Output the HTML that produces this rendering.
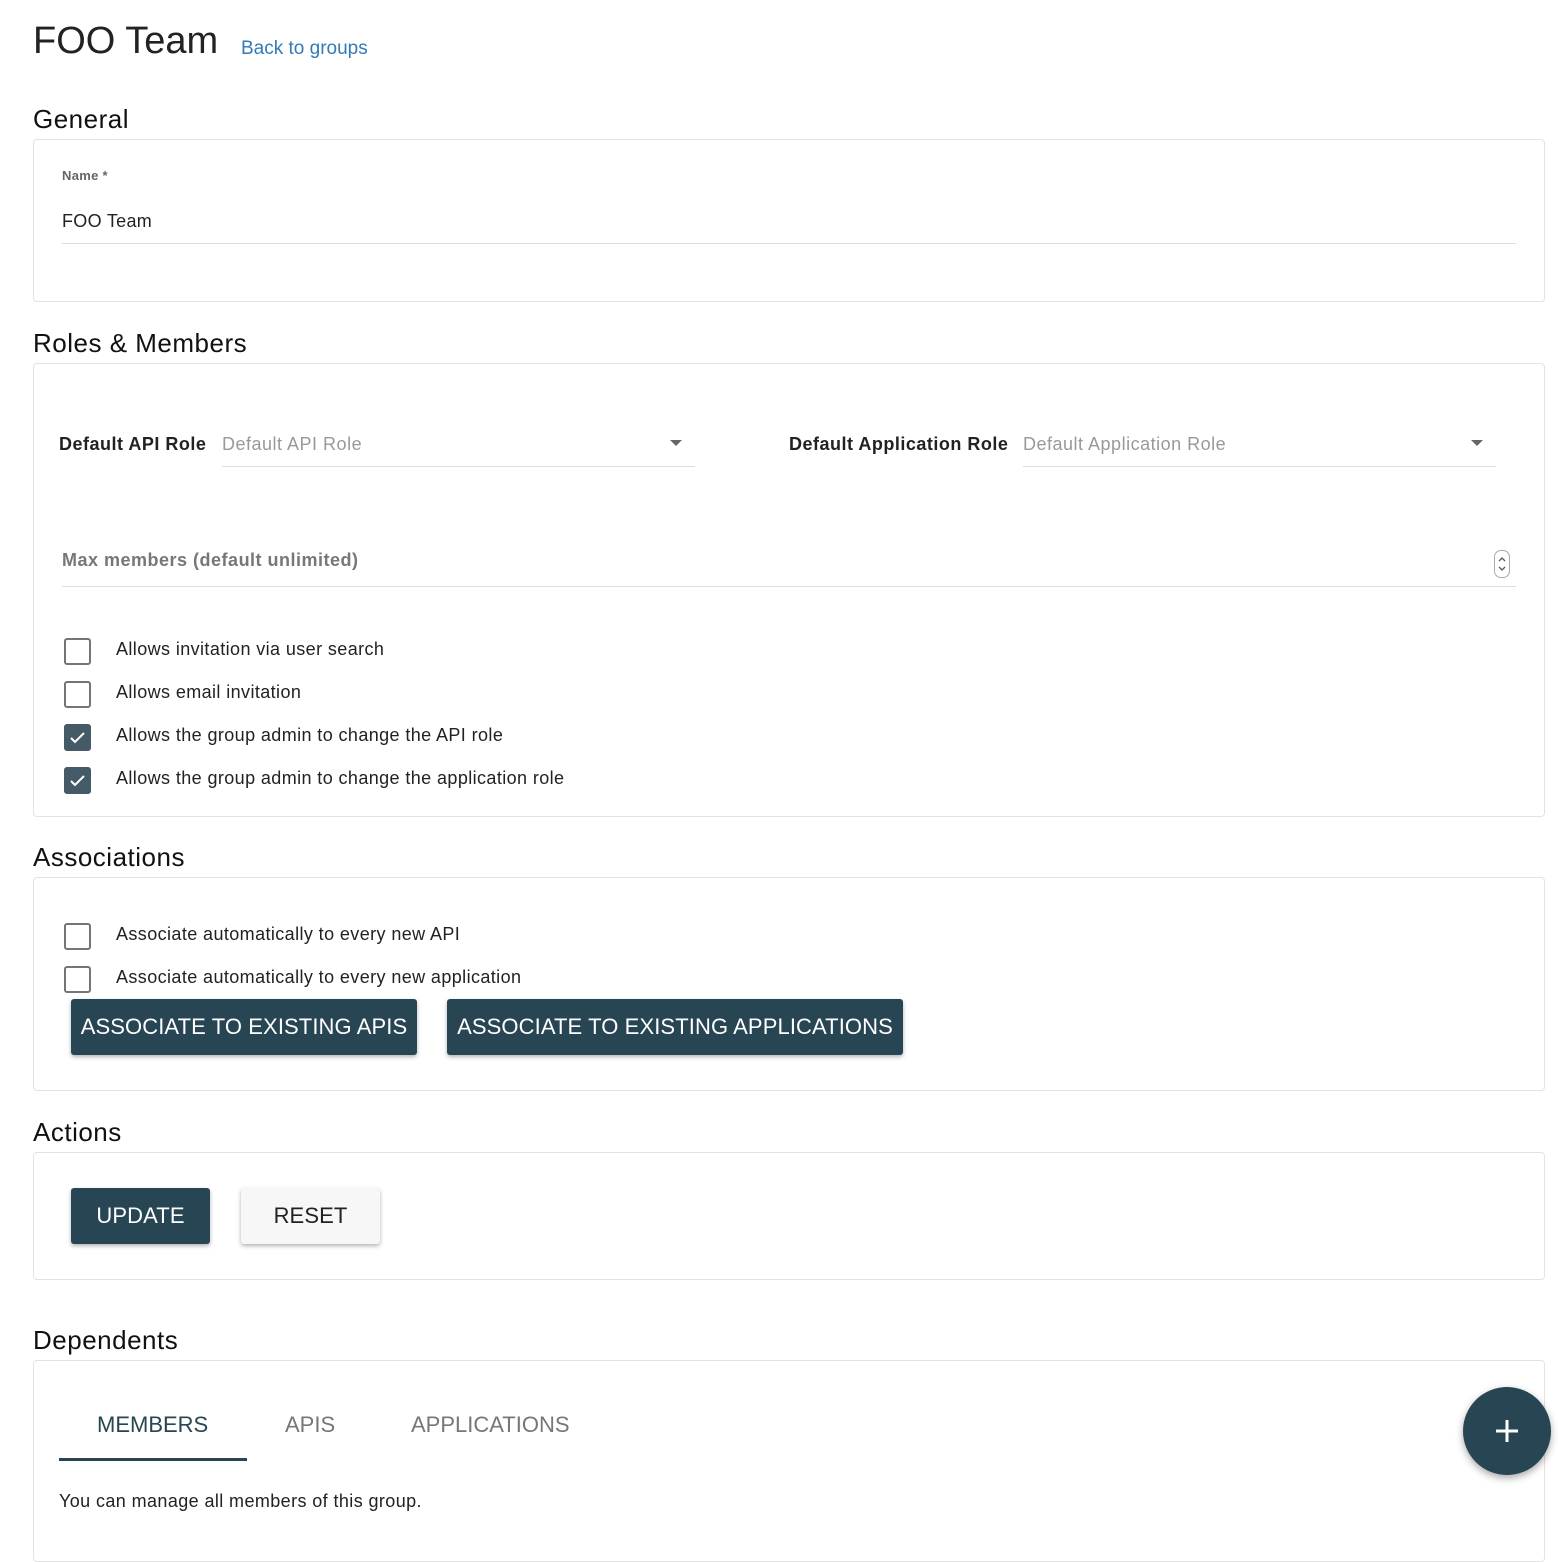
<!DOCTYPE html>
<html><head><style>
body{margin:0;width:1558px;height:1504px;overflow:hidden;background:#fff;font-family:"Liberation Sans",sans-serif;color:#222;position:relative}
.a{position:absolute;white-space:nowrap}
.card{position:absolute;left:33px;width:1510px;border:1px solid #e3e3e3;border-radius:4px;background:#fff}
h2{position:absolute;margin:0;font-weight:normal;font-size:26px;left:33px;color:#111;letter-spacing:.5px}
.line{position:absolute;height:1px;background:#ddd}
.cb{position:absolute;left:64px;width:23px;height:23px;border:2px solid #757575;border-radius:3px}
.cb.on{background:#445a66;border-color:#445a66}
.cb.on svg{position:absolute;left:2px;top:2px}
.lbl{position:absolute;left:116px;font-size:18px;color:#222;white-space:nowrap;letter-spacing:.4px}
.btn{position:absolute;background:#274552;color:#fff;font-size:22px;display:flex;align-items:center;justify-content:center;border-radius:3px;box-shadow:0 2px 4px rgba(0,0,0,.3);letter-spacing:.1px}
.tri{position:absolute;width:0;height:0;border-left:6px solid transparent;border-right:6px solid transparent;border-top:6px solid #666}
.b{letter-spacing:.5px}
</style></head><body>
<div class="a" style="left:33px;top:20px;font-size:38px;color:#222">FOO Team</div>
<div class="a" style="left:241px;top:38px;font-size:19px;color:#337ab7">Back to groups</div>

<h2 style="top:104px">General</h2>
<div class="card" style="top:139px;height:161px"></div>
<div class="a" style="left:62px;top:168px;font-size:13px;font-weight:bold;color:#666;letter-spacing:.3px">Name *</div>
<div class="a" style="left:62px;top:211px;font-size:18px;letter-spacing:.3px">FOO Team</div>
<div class="line" style="left:62px;top:243px;width:1454px"></div>

<h2 style="top:328px">Roles &amp; Members</h2>
<div class="card" style="top:363px;height:452px"></div>
<div class="a b" style="left:59px;top:434px;font-size:18px;font-weight:bold">Default API Role</div>
<div class="a b" style="left:222px;top:434px;font-size:18px;color:#999">Default API Role</div>
<div class="tri" style="left:670px;top:440px"></div>
<div class="line" style="left:222px;top:466px;width:473px"></div>
<div class="a b" style="left:789px;top:434px;font-size:18px;font-weight:bold">Default Application Role</div>
<div class="a b" style="left:1023px;top:434px;font-size:18px;color:#999">Default Application Role</div>
<div class="tri" style="left:1471px;top:440px"></div>
<div class="line" style="left:1023px;top:466px;width:473px"></div>
<div class="a b" style="left:62px;top:550px;font-size:18px;font-weight:bold;color:#777">Max members (default unlimited)</div>
<div class="a" style="left:1494px;top:550px;width:14px;height:26px;border:1px solid #aaa;border-radius:7px"><svg width="14" height="26" viewBox="0 0 14 26"><path d="M4 10l3-3 3 3M4 16l3 3 3-3" fill="none" stroke="#555" stroke-width="1.3"/></svg></div>
<div class="line" style="left:62px;top:586px;width:1454px"></div>

<div class="cb" style="top:638px"></div><div class="lbl" style="top:639px">Allows invitation via user search</div>
<div class="cb" style="top:681px"></div><div class="lbl" style="top:682px">Allows email invitation</div>
<div class="cb on" style="top:724px"><svg width="19" height="19" viewBox="0 0 19 19"><path d="M3 10l4 4 9-9" fill="none" stroke="#fff" stroke-width="2"/></svg></div><div class="lbl" style="top:725px">Allows the group admin to change the API role</div>
<div class="cb on" style="top:767px"><svg width="19" height="19" viewBox="0 0 19 19"><path d="M3 10l4 4 9-9" fill="none" stroke="#fff" stroke-width="2"/></svg></div><div class="lbl" style="top:768px">Allows the group admin to change the application role</div>

<h2 style="top:842px">Associations</h2>
<div class="card" style="top:877px;height:212px"></div>
<div class="cb" style="top:923px"></div><div class="lbl" style="top:924px">Associate automatically to every new API</div>
<div class="cb" style="top:966px"></div><div class="lbl" style="top:967px">Associate automatically to every new application</div>
<div class="btn" style="left:71px;top:999px;width:346px;height:56px">ASSOCIATE TO EXISTING APIS</div>
<div class="btn" style="left:447px;top:999px;width:456px;height:56px">ASSOCIATE TO EXISTING APPLICATIONS</div>

<h2 style="top:1117px">Actions</h2>
<div class="card" style="top:1152px;height:126px"></div>
<div class="btn" style="left:71px;top:1188px;width:139px;height:56px">UPDATE</div>
<div class="btn" style="left:241px;top:1188px;width:139px;height:56px;background:#f7f7f7;color:#222">RESET</div>

<h2 style="top:1325px">Dependents</h2>
<div class="card" style="top:1360px;height:200px"></div>
<div class="a" style="left:97px;top:1412px;font-size:22px;color:#274552">MEMBERS</div>
<div class="a" style="left:285px;top:1412px;font-size:22px;color:#777">APIS</div>
<div class="a" style="left:411px;top:1412px;font-size:22px;color:#777">APPLICATIONS</div>
<div class="a" style="left:59px;top:1458px;width:188px;height:3px;background:#274552"></div>
<div class="a" style="left:59px;top:1491px;font-size:18px;letter-spacing:.4px">You can manage all members of this group.</div>

<div class="a" style="left:1463px;top:1387px;width:88px;height:88px;border-radius:50%;background:#274552;box-shadow:0 3px 8px rgba(0,0,0,.35)"><svg width="88" height="88"><path d="M44 33v22M33 44h22" stroke="#fff" stroke-width="3"/></svg></div>
</body></html>
